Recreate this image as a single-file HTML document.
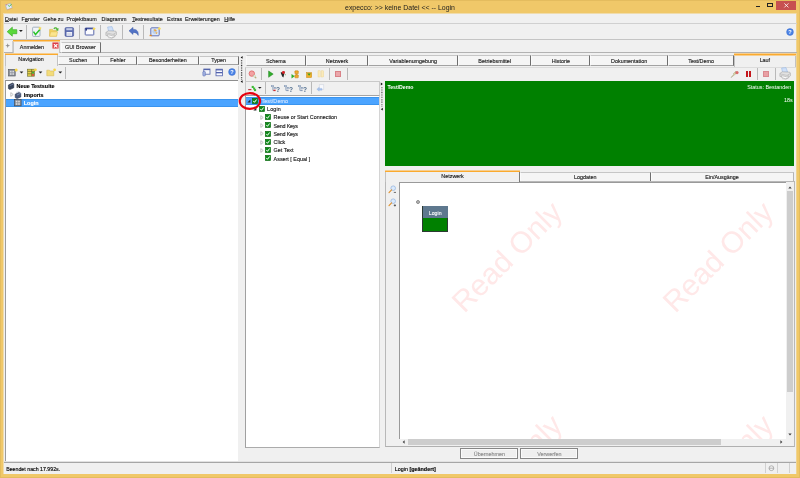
<!DOCTYPE html>
<html><head><meta charset="utf-8">
<style>
html,body{margin:0;padding:0;}
body{width:800px;height:478px;overflow:hidden;position:relative;background:#F0C869;font-family:"Liberation Sans",sans-serif;font-size:5.4px;color:#1a1a1a;-webkit-font-smoothing:antialiased;}
.a{position:absolute;}
.t{position:absolute;white-space:nowrap;line-height:8px;height:8px;-webkit-text-stroke:0.13px currentColor;}
.b{font-weight:bold;}
.wm{position:absolute;white-space:nowrap;font-size:29.9px;line-height:32px;height:32px;color:#ffe8e8;transform:translate(-50%,-50%) rotate(-45deg);}
u{text-decoration-thickness:0.45px;text-underline-offset:0.3px;text-decoration-color:#444;}
.c{text-align:center;}
.tab{position:absolute;box-sizing:border-box;border:1px solid;border-color:#c6c6c6 #6e6e6e #a2a2a2 #fbfbfb;background:#f5f5f5;text-align:center;white-space:nowrap;}
.tabA{position:absolute;box-sizing:border-box;border:1px solid #c2c2c2;border-bottom:none;border-top:none;background:#F0F0F0;text-align:center;white-space:nowrap;}
.or{position:absolute;height:3px;background:linear-gradient(to bottom,#F6CE90 0,#F6CE90 1px,#FBAA2E 1px,#FBAA2E 2px,#F6CE90 2px,#F6CE90 3px);}
.or2{position:absolute;height:2px;background:linear-gradient(to bottom,#F6CE90 0,#F6CE90 1px,#FBAA2E 1px,#FBAA2E 2px);}
.or3{position:absolute;height:2px;background:linear-gradient(to bottom,#FBAA2E 0,#FBAA2E 1px,#F6CE90 1px,#F6CE90 2px);}
.sep{position:absolute;width:1px;background:#b9b9b9;}
.hl{position:absolute;height:1px;background:#ababab;}
.cb{position:absolute;width:6px;height:6px;background:#0a8a14;box-sizing:border-box;border:0.5px solid #0a5a0e;}
.cb:after{content:"";position:absolute;left:1.7px;top:0.4px;width:1.6px;height:3.2px;border:solid #fff;border-width:0 1px 1px 0;transform:rotate(40deg);}
.ex{position:absolute;width:0;height:0;border-left:2.6px solid #a8a8a8;border-top:2px solid transparent;border-bottom:2px solid transparent;}
</style></head><body>
<!-- window chrome -->
<div id="root" style="position:absolute;left:0;top:0;width:800px;height:478px;will-change:transform;">
<div class="a" style="left:0;top:0;width:800px;height:478px;box-sizing:border-box;border:1px solid #E4BC5E;"></div>
<div class="a" id="win" style="left:4px;top:14px;width:792px;height:460px;background:#F0F0F0;"></div>
<div class="a" style="left:3px;top:13px;width:1px;height:461px;background:#F0DCAC;"></div>
<div class="a" style="left:796px;top:13px;width:1px;height:461px;background:#F0D491;"></div>
<div class="a" style="left:3px;top:13px;width:793px;height:1px;background:#F0DCAC;"></div>
<div class="t c" style="left:300px;width:200px;top:3.5px;font-size:6.95px;color:#1c1c1c;-webkit-text-stroke:0;">expecco: &gt;&gt; keine Datei &lt;&lt; -- Login</div>
<!-- SECTION:titlebtns -->
<svg class="a" style="left:4px;top:2px" width="10" height="10" viewBox="0 0 10 10"><path d="M1.4 2.8 L6.6 1.4 L8.2 5.8 L3 7.8 Z" fill="#e3ecf6" stroke="#9fb0c6" stroke-width="0.6"/><path d="M3 7.8 L8.2 5.8 L8.3 6.5 L3.2 8.5 Z" fill="#e0b070"/><path d="M1.4 2.8 L3.6 2.2 L2.6 3.6 Z" fill="#d86a64"/><path d="M4.2 3.3 L5.3 4.5 L7.6 2.1" fill="none" stroke="#55b84c" stroke-width="1"/></svg>
<div class="a" style="left:776.3px;top:0.5px;width:20.2px;height:9px;background:#C75050;"></div>
<svg class="a" style="left:783px;top:2px" width="7" height="7" viewBox="0 0 7 7"><path d="M1.4 1.4 L5.4 5.4 M5.4 1.4 L1.4 5.4" stroke="#fff" stroke-width="0.8" fill="none"/></svg>
<div class="a" style="left:755.8px;top:5.6px;width:3.8px;height:1.1px;background:#222;"></div>
<div class="a" style="left:767.2px;top:3.1px;width:5.6px;height:4px;box-sizing:border-box;border:0.5px solid #222;border-top-width:1.2px;"></div>
<!-- SECTION:menu -->
<div class="hl" style="left:3.5px;top:23px;width:793px;background:#d0d0d0;"></div>
<div class="t" style="left:5px;top:15.3px;"><u>D</u>atei</div>
<div class="t" style="left:21.6px;top:15.3px;">F<u>e</u>nster</div>
<div class="t" style="left:43.2px;top:15.3px;">Gehe zu</div>
<div class="t" style="left:66.5px;top:15.3px;">Projektbaum</div>
<div class="t" style="left:101.6px;top:15.3px;">Diagramm</div>
<div class="t" style="left:132.2px;top:15.3px;"><u>T</u>estresultate</div>
<div class="t" style="left:166.9px;top:15.3px;">Extras</div>
<div class="t" style="left:185px;top:15.3px;">Erweiterungen</div>
<div class="t" style="left:224.3px;top:15.3px;"><u>H</u>ilfe</div>
<!-- SECTION:toolbar -->
<div class="hl" style="left:3.5px;top:39px;width:793px;background:#c4c4c4;"></div>
<div class="sep" style="left:26px;top:24.5px;height:14px;"></div>
<div class="sep" style="left:78.5px;top:24.5px;height:14px;"></div>
<div class="sep" style="left:100.3px;top:24.5px;height:14px;"></div>
<div class="sep" style="left:122.3px;top:24.5px;height:14px;"></div>
<div class="sep" style="left:143px;top:24.5px;height:14px;"></div>
<!-- back arrow -->
<svg class="a" style="left:6px;top:26px" width="18" height="12" viewBox="0 0 18 12"><path d="M1.2 5.7 L6.3 1.2 L6.3 3.7 L10.8 3.7 L10.8 7.7 L6.3 7.7 L6.3 10.2 Z" fill="#5ad83a" stroke="#3bb026" stroke-width="0.7" stroke-linejoin="round"/><path d="M13 4 L16.8 4 L14.9 6 Z" fill="#222"/></svg>
<!-- check doc -->
<svg class="a" style="left:31px;top:26px" width="12" height="12" viewBox="0 0 12 12"><rect x="1.6" y="1.2" width="7.4" height="9.2" rx="0.9" fill="#f1f5f9" stroke="#93a3b4" stroke-width="0.8"/><path d="M2.5 5.6 L4.5 8.6 L8.9 3.6" fill="none" stroke="#27c427" stroke-width="1.5"/><path d="M8.9 0.5 L9.5 1.6 L10.7 1.8 L9.8 2.7 L10 3.9 L8.9 3.3 L7.8 3.9 L8 2.7 L7.1 1.8 L8.3 1.6 Z" fill="#f7da58"/></svg>
<!-- open folder -->
<svg class="a" style="left:47.5px;top:26px" width="12" height="12" viewBox="0 0 12 12"><path d="M1.6 3.4 L4.6 3.4 L5.4 4.4 L8.6 4.4 L8.6 10.2 L1.6 10.2 Z" fill="#f3d25e" stroke="#d4ae3c" stroke-width="0.5"/><path d="M1.6 10.2 L2.8 5.8 L9.6 5.8 L8.6 10.2 Z" fill="#fbe58e" stroke="#d8b444" stroke-width="0.4"/><path d="M5.4 2.6 C6.4 0.8 8.6 0.8 9.6 2.6 L10.6 2 L10.2 5 L7.6 3.9 L8.6 3.3 C8 2.3 7 2.3 6.3 3.2 Z" fill="#4db534"/></svg>
<!-- save -->
<svg class="a" style="left:63.5px;top:26px" width="11" height="12" viewBox="0 0 11 12"><rect x="1" y="1.6" width="8.6" height="8.8" rx="1.2" fill="#5e6eb0" stroke="#46559a" stroke-width="0.6"/><rect x="2.3" y="2.2" width="6" height="2" fill="#c3cce8"/><rect x="2.5" y="6" width="5.6" height="3.8" fill="#f1f3fa"/><path d="M3.2 7.4 H7.4 M3.2 8.6 H7.4" stroke="#b8bfd6" stroke-width="0.5"/></svg>
<!-- new doc -->
<svg class="a" style="left:83.5px;top:26px" width="12" height="12" viewBox="0 0 12 12"><rect x="1.2" y="2" width="8.6" height="7" rx="0.6" fill="#fbfbff" stroke="#4656a0" stroke-width="0.9"/><rect x="1.2" y="2" width="8.6" height="1.3" fill="#4656a0"/><rect x="1.4" y="2.2" width="1.6" height="2.4" fill="#2f3c80"/><path d="M10.1 0.9 L10.7 2 L11.9 2.2 L11 3.1 L11.2 4.3 L10.1 3.7 L9 4.3 L9.2 3.1 L8.3 2.2 L9.5 2 Z" fill="#f7da58"/></svg>
<!-- printer -->
<svg class="a" style="left:104.5px;top:25.5px" width="13" height="13" viewBox="0 0 13 13"><path d="M2.6 1 L7 0.6 L8.6 5 L3.6 5.6 Z" fill="#cfe0f8" stroke="#8fb0e0" stroke-width="0.5"/><path d="M0.9 6.4 L3.4 4.8 L10.8 5.2 L11.4 6.4 L11.4 8.8 L8 11.2 L0.9 9.4 Z" fill="#e2e2e2" stroke="#9a9a9a" stroke-width="0.5"/><path d="M0.9 6.8 L8 8.4 L11.4 6.4" fill="none" stroke="#a8a8a8" stroke-width="0.5"/><path d="M2.4 8.6 L7.6 9.8 L9.4 8.6 L9 11 L6.4 11.8 L2.8 10.6 Z" fill="#fafafa" stroke="#8c8c8c" stroke-width="0.4"/><path d="M3 11.6 L7 12.4 L10.4 10.4" fill="none" stroke="#bdbdbd" stroke-width="0.6"/></svg>
<!-- undo -->
<svg class="a" style="left:127.5px;top:26px" width="12" height="12" viewBox="0 0 12 12"><path d="M1 4.8 L5 1.4 L5 3.4 C8.6 3.2 10.6 5 10.2 9.4 C9.2 7.2 7.8 6.4 5 6.4 L5 8.4 Z" fill="#5273c6" stroke="#3d5aa6" stroke-width="0.5" stroke-linejoin="round"/></svg>
<!-- misc -->
<svg class="a" style="left:148.5px;top:26px" width="13" height="12" viewBox="0 0 13 12"><rect x="1.8" y="1.8" width="8.4" height="8" rx="0.9" fill="#dbe7f8" stroke="#5868b2" stroke-width="0.9"/><circle cx="5.6" cy="5.6" r="2.3" fill="#bcd2f0"/><path d="M4.6 3.6 A2.3 2.3 0 0 1 7.8 5 L5.8 5.4 Z" fill="#f0a63a"/><path d="M6.6 6.2 L8.6 6.6 A2.3 2.3 0 0 1 7 8 Z" fill="#f0a63a"/><path d="M10.3 0.7 L10.9 1.8 L12.1 2 L11.2 2.9 L11.4 4.1 L10.3 3.5 L9.2 4.1 L9.4 2.9 L8.5 2 L9.7 1.8 Z" fill="#f7da58"/><rect x="0.6" y="8.8" width="2.2" height="1.4" fill="#e08a2a"/></svg>
<!-- help -->
<svg class="a" style="left:785.7px;top:27.6px" width="8" height="8" viewBox="0 0 8 8"><circle cx="4" cy="4" r="3.4" fill="#4a83e6" stroke="#3a6ccc" stroke-width="0.5"/><text x="4" y="6.1" font-size="5.6" font-weight="bold" text-anchor="middle" fill="#fff" font-family="Liberation Sans">?</text></svg>
<!-- SECTION:tabs1 -->
<div class="hl" style="left:3.5px;top:52.3px;width:793px;background:#b2b2b2;"></div>
<div class="a" style="left:4px;top:41px;width:9px;height:11.4px;background:#f3f3f3;box-sizing:border-box;border-right:1px solid #d0d0d0;"></div>
<svg class="a" style="left:5.4px;top:42.6px" width="5.4" height="5.4" viewBox="0 0 5.4 5.4"><path d="M2.7 0.3 L3.3 2.1 L5.1 2.7 L3.3 3.3 L2.7 5.1 L2.1 3.3 L0.3 2.7 L2.1 2.1 Z" fill="#8e8e8e"/></svg>
<div class="tabA" style="left:13.2px;top:40px;width:47.3px;height:13px;border-color:#c6c6c6;"></div><div class="or3" style="left:13.2px;top:40px;width:47.3px;"></div>
<div class="t" style="left:19.8px;top:42.6px;">Anmelden</div>
<div class="a" style="left:52.4px;top:42.4px;width:6.4px;height:6.4px;background:#dc4046;border-radius:1.2px;box-sizing:border-box;border:0.6px solid #e88a8c;"></div>
<svg class="a" style="left:52px;top:42px" width="8" height="8" viewBox="0 0 8 8"><path d="M2.3 2.5 L5 5.2 M5 2.5 L2.3 5.2" stroke="#fff" stroke-width="1.15" fill="none" stroke-linecap="round"/></svg>
<div class="tab" style="left:60.5px;top:41.5px;width:40px;height:11px;"></div>
<div class="t" style="left:65px;top:42.6px;">GUI Browser</div>
<!-- SECTION:left -->
<!-- sub tabs -->
<div class="tabA" style="left:4.6px;top:53px;width:53px;height:12.8px;"></div><div class="or2" style="left:4.6px;top:53px;width:53px;"></div>
<div class="t c" style="left:4.6px;width:53px;top:55.2px;">Navigation</div>
<div class="tab" style="left:57.8px;top:55.5px;width:40.8px;height:9px;"></div>
<div class="t c" style="left:57.8px;width:40.8px;top:56px;">Suchen</div>
<div class="tab" style="left:98.6px;top:55.5px;width:38.4px;height:9px;"></div>
<div class="t c" style="left:98.6px;width:38.4px;top:56px;">Fehler</div>
<div class="tab" style="left:137px;top:55.5px;width:61.6px;height:9px;"></div>
<div class="t c" style="left:137px;width:61.6px;top:56px;">Besonderheiten</div>
<div class="tab" style="left:198.6px;top:55.5px;width:40px;height:9px;"></div>
<div class="t c" style="left:198.6px;width:40px;top:56px;">Typen</div>
<!-- left toolbar -->
<div class="a" style="left:4.6px;top:65.6px;width:234px;height:13.6px;box-sizing:border-box;border-right:1px solid #c6c6c6;border-left:1px solid #d4d4d4;"></div>
<div class="sep" style="left:65px;top:66.5px;height:12px;"></div>
<svg class="a" style="left:7.5px;top:68px" width="16" height="9" viewBox="0 0 16 9"><rect x="0.6" y="1.4" width="6.6" height="6.6" fill="#8d929a" stroke="#4c5058" stroke-width="0.6"/><rect x="2" y="2.8" width="1.6" height="1.6" fill="#d8dade"/><rect x="4.4" y="2.8" width="1.6" height="1.6" fill="#d8dade"/><rect x="2" y="5.2" width="1.6" height="1.6" fill="#d8dade"/><rect x="4.4" y="5.2" width="1.6" height="1.6" fill="#d8dade"/><circle cx="8.2" cy="2" r="1.5" fill="#f7d648"/><path d="M11.6 3.6 L15.4 3.6 L13.5 5.6 Z" fill="#222"/></svg>
<svg class="a" style="left:27px;top:68px" width="16" height="9" viewBox="0 0 16 9"><rect x="0.6" y="1.2" width="6.8" height="7" fill="#e6d24a" stroke="#6b6a2a" stroke-width="0.6"/><path d="M0.6 3.4 H7.4 M0.6 5.8 H7.4 M4.6 1.2 V8.2" stroke="#55551f" stroke-width="0.6"/><rect x="5" y="3.8" width="2" height="1.6" fill="#3fae3a"/><rect x="5" y="6.2" width="2" height="1.6" fill="#d9443a"/><circle cx="8.4" cy="1.8" r="1.4" fill="#f7d648"/><path d="M11.6 3.6 L15.4 3.6 L13.5 5.6 Z" fill="#222"/></svg>
<svg class="a" style="left:46px;top:68px" width="17" height="9" viewBox="0 0 17 9"><path d="M0.8 2.2 L3.4 2.2 L4.2 3 L7.8 3 L7.8 7.8 L0.8 7.8 Z" fill="#f3dc7a" stroke="#d2b24a" stroke-width="0.5"/><circle cx="8.6" cy="1.8" r="1.4" fill="#f7d648"/><path d="M12.4 3.6 L16.2 3.6 L14.3 5.6 Z" fill="#222"/></svg>
<!-- right icons in left toolbar -->
<svg class="a" style="left:202px;top:68px" width="9" height="9" viewBox="0 0 9 9"><rect x="1.8" y="1" width="6.2" height="5.2" fill="#f6f7fc" stroke="#5464aa" stroke-width="0.8"/><rect x="1.8" y="1" width="6.2" height="1.1" fill="#5464aa"/><rect x="0.8" y="3.4" width="2.6" height="4.6" rx="0.8" fill="#9fb0e0" stroke="#5a6ab2" stroke-width="0.5"/></svg>
<svg class="a" style="left:214.8px;top:68px" width="9" height="9" viewBox="0 0 9 9"><rect x="1" y="1.2" width="6.4" height="6.6" fill="#fafbff" stroke="#5262ac" stroke-width="0.8"/><rect x="1" y="1.2" width="6.4" height="1.2" fill="#5262ac"/><rect x="1" y="4" width="6.4" height="1.3" fill="#5262ac"/></svg>
<svg class="a" style="left:228px;top:68.4px" width="8" height="8" viewBox="0 0 8 8"><circle cx="4" cy="4" r="3.4" fill="#4a83e6" stroke="#3a6ccc" stroke-width="0.5"/><text x="4" y="6.1" font-size="5.6" font-weight="bold" text-anchor="middle" fill="#fff" font-family="Liberation Sans">?</text></svg>
<!-- left tree -->
<div class="a" style="left:4.6px;top:79.6px;width:233.6px;height:381px;background:#fff;box-sizing:border-box;border:1px solid #9c9c9c;border-top-color:#8e8e8e;border-right:none;border-bottom:none;"></div>
<div class="a" style="left:5.6px;top:98.6px;width:232.4px;height:8.6px;background:#4ba4ff;box-sizing:border-box;border-top:1px solid #3a94ee;border-bottom:1px solid #3a94ee;"></div>
<svg class="a" style="left:6.6px;top:81.5px" width="8" height="8" viewBox="0 0 8 8"><path d="M1.4 3 L5.4 1 L6.8 1.8 L6.8 5.8 L2.8 7.6 L1.4 6.6 Z" fill="#39465e" stroke="#1c2436" stroke-width="0.5"/><path d="M2.8 3.6 L6.8 1.8" stroke="#8ea0c4" stroke-width="0.6"/></svg>
<div class="t b" style="left:16.5px;top:82px;color:#000;">Neue Testsuite</div>
<svg class="a" style="left:10px;top:92.1px" width="4" height="5" viewBox="0 0 4 5"><path d="M0.8 0.6 L3.2 2.5 L0.8 4.4 Z" fill="#fff" stroke="#a0a0a0" stroke-width="0.6"/></svg>
<svg class="a" style="left:13.6px;top:90.6px" width="8" height="8" viewBox="0 0 8 8"><path d="M1.2 3.2 L4.8 1.4 L6.8 2.2 L6.8 6 L3 7.6 L1.2 6.6 Z" fill="#4a5a7c" stroke="#232c44" stroke-width="0.5"/><path d="M3 4 L6.8 2.2 M2.4 1.8 L3.2 0.6 M4.6 1.2 L5 0.2" stroke="#9fb0d4" stroke-width="0.6"/></svg>
<div class="t b" style="left:23.8px;top:90.6px;color:#000;">Imports</div>
<svg class="a" style="left:14.2px;top:99.2px" width="8" height="7.4" viewBox="0 0 8 7.4"><rect x="0.5" y="0.5" width="6.6" height="6.4" fill="#8a8e96" stroke="#3d4048" stroke-width="0.6"/><rect x="1.8" y="1.8" width="1.6" height="1.6" fill="#d9dbe0"/><rect x="4.2" y="1.8" width="1.6" height="1.6" fill="#d9dbe0"/><rect x="1.8" y="4.2" width="1.6" height="1.6" fill="#d9dbe0"/><rect x="4.2" y="4.2" width="1.6" height="1.6" fill="#d9dbe0"/></svg>
<div class="t b" style="left:23.8px;top:98.9px;color:#fff;">Login</div>
<!-- splitter -->
<svg class="a" style="left:239px;top:55px" width="6" height="30" viewBox="0 0 6 30"><path d="M1.6 2.4 L3.6 1 L3.6 3.8 Z M1.6 26.6 L3.6 25.2 L3.6 28 Z" fill="#111"/><path d="M2.6 5 V24.6" stroke="#333" stroke-width="1.3" stroke-dasharray="0.8 0.9"/></svg>
<!-- SECTION:right -->
<!-- right tabs -->
<div class="tab" style="left:246.2px;top:55px;width:59.4px;height:11.4px;"></div>
<div class="t c" style="left:246.2px;width:59.4px;top:56.7px;">Schema</div>
<div class="tab" style="left:305.6px;top:55px;width:62.8px;height:11.4px;"></div>
<div class="t c" style="left:305.6px;width:62.8px;top:56.7px;">Netzwerk</div>
<div class="tab" style="left:368.4px;top:55px;width:89.6px;height:11.4px;"></div>
<div class="t c" style="left:368.4px;width:89.6px;top:56.7px;">Variablenumgebung</div>
<div class="tab" style="left:458px;top:55px;width:73.4px;height:11.4px;"></div>
<div class="t c" style="left:458px;width:73.4px;top:56.7px;">Betriebsmittel</div>
<div class="tab" style="left:531.4px;top:55px;width:58.8px;height:11.4px;"></div>
<div class="t c" style="left:531.4px;width:58.8px;top:56.7px;">Historie</div>
<div class="tab" style="left:590.2px;top:55px;width:78px;height:11.4px;"></div>
<div class="t c" style="left:590.2px;width:78px;top:56.7px;">Dokumentation</div>
<div class="tab" style="left:668.2px;top:55px;width:65.8px;height:11.4px;"></div>
<div class="t c" style="left:668.2px;width:65.8px;top:56.7px;">Test/Demo</div>
<div class="tabA" style="left:734.2px;top:53px;width:61.4px;height:14px;"></div><div class="or" style="left:734.2px;top:53px;width:61.4px;"></div>
<div class="t c" style="left:734.2px;width:61.4px;top:56.3px;">Lauf</div>
<!-- right toolbar -->
<div class="a" style="left:245.4px;top:66.8px;width:550.4px;height:14px;box-sizing:border-box;border-left:1px solid #c4c4c4;border-top:1px solid #dcdcdc;"></div>
<div class="sep" style="left:260.8px;top:67.6px;height:12.6px;"></div>
<div class="sep" style="left:329.2px;top:67.6px;height:12.6px;"></div>
<div class="sep" style="left:347.4px;top:67.6px;height:12.6px;"></div>
<div class="sep" style="left:757.2px;top:67.6px;height:12.6px;"></div>
<div class="sep" style="left:774.6px;top:67.6px;height:12.6px;"></div>
<!-- magnifier red -->
<svg class="a" style="left:248.2px;top:70px" width="9" height="9" viewBox="0 0 9 9"><circle cx="3.8" cy="3.6" r="2.7" fill="#f2a3a3" stroke="#e06a6a" stroke-width="0.9"/><path d="M5.8 5.6 L7.8 7.8" stroke="#b9b07a" stroke-width="1.3" stroke-linecap="round"/><circle cx="6.6" cy="6" r="1.1" fill="#e7efdf" stroke="#b5c6a6" stroke-width="0.3"/></svg>
<!-- play -->
<svg class="a" style="left:266.8px;top:70.4px" width="8" height="8.4" viewBox="0 0 8 8.4"><path d="M1.6 1 L6.2 4.1 L1.6 7.3 Z" fill="#2fae2a" stroke="#1d7f1a" stroke-width="0.5" stroke-linejoin="round"/></svg>
<!-- bug / traffic -->
<svg class="a" style="left:279.4px;top:70.2px" width="8" height="8.4" viewBox="0 0 8 8.4"><path d="M1.6 2.6 L5.8 1.6 L4.4 7.6 L3.2 6.4 Z" fill="#262626"/><circle cx="4.4" cy="2.5" r="1.45" fill="#dc2226"/><path d="M5.8 4.2 L6.7 4.9" stroke="#2d8a2a" stroke-width="0.8"/></svg>
<!-- play + orange blocks -->
<svg class="a" style="left:291.4px;top:69.8px" width="9" height="9" viewBox="0 0 9 9"><rect x="3.9" y="0.8" width="3.4" height="3" rx="0.5" fill="#f2a92c" stroke="#b87a10" stroke-width="0.5"/><rect x="3.9" y="4.8" width="3.4" height="3" rx="0.5" fill="#f2a92c" stroke="#b87a10" stroke-width="0.5"/><path d="M5.6 3.8 V4.8" stroke="#b87a10" stroke-width="0.7"/><path d="M0.5 4 L3.7 6.2 L0.5 8.4 Z" fill="#2fae2a"/></svg>
<!-- envelope -->
<svg class="a" style="left:305.6px;top:71.6px" width="6.4" height="6.4" viewBox="0 0 6.4 6.4"><rect x="0.5" y="0.6" width="5.2" height="5" fill="#f0b02a" stroke="#c98a14" stroke-width="0.5"/><path d="M1.3 1.4 L4.9 1.4 L3.1 3.7 Z" fill="#2f9e2a"/></svg>
<!-- pause light -->
<svg class="a" style="left:316.8px;top:70.4px" width="8" height="8" viewBox="0 0 8 8"><rect x="1" y="0.8" width="2.2" height="6.2" fill="#fbeab8" stroke="#ecd28c" stroke-width="0.4"/><rect x="4.4" y="0.8" width="2.2" height="6.2" fill="#fbeab8" stroke="#ecd28c" stroke-width="0.4"/></svg>
<!-- stop pink -->
<div class="a" style="left:335.4px;top:71.4px;width:6px;height:6px;box-sizing:border-box;background:#eba6aa;border:0.7px solid #d98288;"></div>
<!-- right side icons -->
<svg class="a" style="left:729.6px;top:70px" width="10" height="9" viewBox="0 0 10 9"><path d="M1 7.6 L4.2 3.8 L3.4 3.6 L6 1.2 L5 3.4 L6 3.6 Z" fill="#f3e7a8" stroke="#8c8a6a" stroke-width="0.4"/><circle cx="7" cy="2.6" r="1.6" fill="#d86a6a"/></svg>
<div class="a" style="left:746px;top:71.2px;width:1.8px;height:6px;background:#c4161c;"></div>
<div class="a" style="left:749.2px;top:71.2px;width:1.8px;height:6px;background:#c4161c;"></div>
<div class="a" style="left:763px;top:71.2px;width:5.8px;height:5.8px;box-sizing:border-box;background:#e9a0a4;border:0.7px solid #d98a90;"></div>
<svg class="a" style="left:778.8px;top:67.4px" width="13" height="13" viewBox="0 0 13 13"><path d="M2.6 1 L7 0.6 L8.6 5 L3.6 5.6 Z" fill="#cfe0f8" stroke="#8fb0e0" stroke-width="0.5"/><path d="M0.9 6.4 L3.4 4.8 L10.8 5.2 L11.4 6.4 L11.4 8.8 L8 11.2 L0.9 9.4 Z" fill="#e2e2e2" stroke="#9a9a9a" stroke-width="0.5"/><path d="M0.9 6.8 L8 8.4 L11.4 6.4" fill="none" stroke="#a8a8a8" stroke-width="0.5"/><path d="M2.4 8.6 L7.6 9.8 L9.4 8.6 L9 11 L6.4 11.8 L2.8 10.6 Z" fill="#fafafa" stroke="#8c8c8c" stroke-width="0.4"/><path d="M3 11.6 L7 12.4 L10.4 10.4" fill="none" stroke="#bdbdbd" stroke-width="0.6"/></svg>
<!-- second toolbar (tree) -->
<div class="a" style="left:245.4px;top:81.4px;width:134.6px;height:13.4px;box-sizing:border-box;border:1px solid #c9c9c9;border-bottom:none;"></div>
<div class="sep" style="left:265.4px;top:82.4px;height:11.6px;"></div>
<div class="sep" style="left:311.4px;top:82.4px;height:11.6px;"></div>
<svg class="a" style="left:248.2px;top:84px" width="14" height="9" viewBox="0 0 14 9"><rect x="0.2" y="5" width="3.2" height="1.2" fill="#b84048"/><rect x="3.7" y="1.9" width="2.1" height="2.1" fill="#3cba34"/><rect x="5.1" y="3.5" width="2.1" height="2.1" fill="#3cba34"/><rect x="6" y="5.1" width="2.1" height="2" fill="#3cba34"/><path d="M10 3 L13.6 3 L11.8 4.8 Z" fill="#222"/></svg>
<svg class="a" style="left:270.6px;top:84.6px" width="9" height="8" viewBox="0 0 9 8"><path d="M0.6 1.1 H3 M1.8 1.1 V5.4 M1.8 3 H4.4 M1.8 5.4 H3" stroke="#8196b2" stroke-width="0.7" fill="none"/><rect x="0.5" y="0.5" width="1.7" height="1.3" fill="#dfe7f2" stroke="#7088a8" stroke-width="0.4"/><rect x="3.2" y="2.3" width="1.7" height="1.3" fill="#dfe7f2" stroke="#7088a8" stroke-width="0.4"/><rect x="2.4" y="4.7" width="2.2" height="1.4" fill="#d02a2e"/><text x="7" y="6.6" font-size="6.6" font-weight="bold" text-anchor="middle" fill="#4f6c8c" font-family="Liberation Sans">?</text></svg>
<svg class="a" style="left:284.4px;top:84.6px" width="9" height="8" viewBox="0 0 9 8"><path d="M0.6 1.1 H3 M1.8 1.1 V5.4 M1.8 3 H4.4 M1.8 5.4 H3" stroke="#8196b2" stroke-width="0.7" fill="none"/><rect x="0.5" y="0.5" width="1.7" height="1.3" fill="#dfe7f2" stroke="#7088a8" stroke-width="0.4"/><rect x="3.2" y="2.3" width="1.7" height="1.3" fill="#dfe7f2" stroke="#7088a8" stroke-width="0.4"/><rect x="2.4" y="4.7" width="2.2" height="1.4" fill="#8a9cb8"/><text x="7" y="6.6" font-size="6.6" font-weight="bold" text-anchor="middle" fill="#4f6c8c" font-family="Liberation Sans">?</text></svg>
<svg class="a" style="left:298.2px;top:84.6px" width="9" height="8" viewBox="0 0 9 8"><path d="M0.6 1.1 H3 M1.8 1.1 V5.4 M1.8 3 H4.4 M1.8 5.4 H3" stroke="#8196b2" stroke-width="0.7" fill="none"/><rect x="0.5" y="0.5" width="1.7" height="1.3" fill="#dfe7f2" stroke="#7088a8" stroke-width="0.4"/><rect x="3.2" y="2.3" width="1.7" height="1.3" fill="#dfe7f2" stroke="#7088a8" stroke-width="0.4"/><rect x="2.4" y="4.7" width="2.2" height="1.4" fill="#8a9cb8"/><text x="7" y="6.6" font-size="6.6" font-weight="bold" text-anchor="middle" fill="#4f6c8c" font-family="Liberation Sans">?</text></svg>
<svg class="a" style="left:316px;top:84.2px" width="9" height="8" viewBox="0 0 9 8"><rect x="3.2" y="0.8" width="4.6" height="4.8" fill="#f8f9fc" stroke="#c9cfdc" stroke-width="0.5"/><path d="M0.8 5.2 L3.2 3.2 L3.2 4.4 L6 4.4 L6 6.2 L3.2 6.2 L3.2 7.2 Z" fill="#a6c2ec" stroke="#8eaee0" stroke-width="0.3"/></svg>
<!-- tree panel -->
<div class="a" style="left:245px;top:95.2px;width:135.2px;height:353px;background:#fff;box-sizing:border-box;border:1px solid #a0a0a0;border-top-color:#a4a4a4;border-right-color:#d4d4d4;border-bottom-color:#ababab;"></div>
<div class="a" style="left:246.4px;top:96.6px;width:132.8px;height:8.4px;background:#4ba4ff;box-sizing:border-box;border-top:1px solid #3a94ee;border-bottom:1px solid #3a94ee;"></div>
<svg class="a" style="left:247px;top:99px" width="4" height="4" viewBox="0 0 4 4"><path d="M3.4 0.4 L3.4 3.4 L0.4 3.4 Z" fill="#2a2a2a"/></svg>
<svg class="a" style="left:252px;top:97.7px" width="6" height="6" viewBox="0 0 6 6"><rect x="0.3" y="0.3" width="5.3" height="5.3" fill="#0c8c18" stroke="#0a6410" stroke-width="0.6"/><path d="M1.3 2.9 L2.5 4.3 L4.6 1.5" fill="none" stroke="#fff" stroke-width="1"/></svg>
<div class="t" style="left:261.4px;top:96.8px;color:#cfe3ff;letter-spacing:0.12px;">Test/Demo</div>
<svg class="a" style="left:253.4px;top:107.4px" width="4" height="4" viewBox="0 0 4 4"><path d="M3.4 0.4 L3.4 3.4 L0.4 3.4 Z" fill="#2a2a2a"/></svg>
<svg class="a" style="left:258.9px;top:105.9px" width="6" height="6" viewBox="0 0 6 6"><rect x="0.3" y="0.3" width="5.3" height="5.3" fill="#0c8c18" stroke="#0a6410" stroke-width="0.6"/><path d="M1.3 2.9 L2.5 4.3 L4.6 1.5" fill="none" stroke="#fff" stroke-width="1"/></svg>
<div class="t" style="left:267px;top:105.1px;letter-spacing:0.15px;">Login</div>
<svg class="a" style="left:260.4px;top:114.8px" width="4" height="5" viewBox="0 0 4 5"><path d="M0.8 0.6 L3.2 2.5 L0.8 4.4 Z" fill="#fff" stroke="#a0a0a0" stroke-width="0.6"/></svg>
<svg class="a" style="left:265.2px;top:114.2px" width="6" height="6" viewBox="0 0 6 6"><rect x="0.3" y="0.3" width="5.3" height="5.3" fill="#0c8c18" stroke="#0a6410" stroke-width="0.6"/><path d="M1.3 2.9 L2.5 4.3 L4.6 1.5" fill="none" stroke="#fff" stroke-width="1"/></svg>
<div class="t" style="left:273.6px;top:113.3px;">Reuse or Start Connection</div>
<svg class="a" style="left:260.4px;top:123px" width="4" height="5" viewBox="0 0 4 5"><path d="M0.8 0.6 L3.2 2.5 L0.8 4.4 Z" fill="#fff" stroke="#a0a0a0" stroke-width="0.6"/></svg>
<svg class="a" style="left:265.2px;top:122.4px" width="6" height="6" viewBox="0 0 6 6"><rect x="0.3" y="0.3" width="5.3" height="5.3" fill="#0c8c18" stroke="#0a6410" stroke-width="0.6"/><path d="M1.3 2.9 L2.5 4.3 L4.6 1.5" fill="none" stroke="#fff" stroke-width="1"/></svg>
<div class="t" style="left:273.6px;top:121.5px;letter-spacing:-0.2px;">Send Keys</div>
<svg class="a" style="left:260.4px;top:131.3px" width="4" height="5" viewBox="0 0 4 5"><path d="M0.8 0.6 L3.2 2.5 L0.8 4.4 Z" fill="#fff" stroke="#a0a0a0" stroke-width="0.6"/></svg>
<svg class="a" style="left:265.2px;top:130.7px" width="6" height="6" viewBox="0 0 6 6"><rect x="0.3" y="0.3" width="5.3" height="5.3" fill="#0c8c18" stroke="#0a6410" stroke-width="0.6"/><path d="M1.3 2.9 L2.5 4.3 L4.6 1.5" fill="none" stroke="#fff" stroke-width="1"/></svg>
<div class="t" style="left:273.6px;top:129.8px;letter-spacing:-0.2px;">Send Keys</div>
<svg class="a" style="left:260.4px;top:139.5px" width="4" height="5" viewBox="0 0 4 5"><path d="M0.8 0.6 L3.2 2.5 L0.8 4.4 Z" fill="#fff" stroke="#a0a0a0" stroke-width="0.6"/></svg>
<svg class="a" style="left:265.2px;top:138.9px" width="6" height="6" viewBox="0 0 6 6"><rect x="0.3" y="0.3" width="5.3" height="5.3" fill="#0c8c18" stroke="#0a6410" stroke-width="0.6"/><path d="M1.3 2.9 L2.5 4.3 L4.6 1.5" fill="none" stroke="#fff" stroke-width="1"/></svg>
<div class="t" style="left:273.6px;top:138px;">Click</div>
<svg class="a" style="left:260.4px;top:147.7px" width="4" height="5" viewBox="0 0 4 5"><path d="M0.8 0.6 L3.2 2.5 L0.8 4.4 Z" fill="#fff" stroke="#a0a0a0" stroke-width="0.6"/></svg>
<svg class="a" style="left:265.2px;top:147.1px" width="6" height="6" viewBox="0 0 6 6"><rect x="0.3" y="0.3" width="5.3" height="5.3" fill="#0c8c18" stroke="#0a6410" stroke-width="0.6"/><path d="M1.3 2.9 L2.5 4.3 L4.6 1.5" fill="none" stroke="#fff" stroke-width="1"/></svg>
<div class="t" style="left:273.6px;top:146.2px;">Get Text</div>
<svg class="a" style="left:265.2px;top:155.4px" width="6" height="6" viewBox="0 0 6 6"><rect x="0.3" y="0.3" width="5.3" height="5.3" fill="#0c8c18" stroke="#0a6410" stroke-width="0.6"/><path d="M1.3 2.9 L2.5 4.3 L4.6 1.5" fill="none" stroke="#fff" stroke-width="1"/></svg>
<div class="t" style="left:273.6px;top:154.5px;">Assert [ Equal ]</div>
<!-- red ellipse annotation -->
<svg class="a" style="left:236px;top:90px" width="28" height="22" viewBox="0 0 28 22"><ellipse cx="13.9" cy="11" rx="10.2" ry="7.9" fill="none" stroke="#e6000f" stroke-width="2.1"/></svg>
<!-- splitter 2 -->
<svg class="a" style="left:380.4px;top:81px" width="5" height="32" viewBox="0 0 5 32"><path d="M0.8 1.6 L2.8 3 L0.8 4.4 Z M2.8 26.8 L0.8 28.2 L2.8 29.6 Z" fill="#111"/><path d="M1.9 6 V26" stroke="#444" stroke-width="1.1" stroke-dasharray="0.8 0.9"/></svg>
<!-- green result panel -->
<div class="a" style="left:385.2px;top:80.8px;width:409px;height:85.2px;background:#008000;"></div>
<div class="t b" style="left:387.4px;top:82.8px;color:#fff;font-size:5.2px;-webkit-text-stroke:0;">Test/Demo</div>
<div class="t" style="right:8.8px;top:82.9px;color:#fff;-webkit-text-stroke:0;">Status: Bestanden</div>
<div class="t" style="right:7.4px;top:96.4px;color:#fff;-webkit-text-stroke:0;">18s</div>
<!-- SECTION:lower -->
<!-- lower tabs -->
<div class="tabA" style="left:385.4px;top:170px;width:134.4px;height:13px;border-right-color:#7a7a7a;"></div><div class="or2" style="left:385.4px;top:170px;width:134.4px;"></div>
<div class="t c" style="left:385.4px;width:134.4px;top:172.2px;">Netzwerk</div>
<div class="tab" style="left:519.6px;top:172px;width:131px;height:10px;"></div>
<div class="t c" style="left:520px;width:130.4px;top:172.7px;">Logdaten</div>
<div class="tab" style="left:650.6px;top:172px;width:143px;height:10px;border-right-color:#b4b4b4;"></div>
<div class="t c" style="left:651px;width:142px;top:172.7px;">Ein/Ausg&auml;nge</div>
<!-- pane frame -->
<div class="a" style="left:385.4px;top:181.6px;width:409.4px;height:265.4px;box-sizing:border-box;border-left:1px solid #b8b8b8;border-right:1px solid #b8b8b8;border-bottom:1px solid #b0b0b0;"></div>
<div class="hl" style="left:519.8px;top:181.4px;width:275px;background:#b8b8b8;"></div>
<!-- canvas -->
<div class="a" id="canvas" style="left:398.6px;top:182.2px;width:387.4px;height:256.6px;background:#fff;overflow:hidden;box-sizing:border-box;border-left:1px solid #9a9a9a;border-top:1px solid #9a9a9a;">
<div class="wm" style="left:107.2px;top:74.1px;">Read Only</div>
<div class="wm" style="left:318.8px;top:74.1px;">Read Only</div>
<div class="wm" style="left:107.2px;top:286.7px;">Read Only</div>
<div class="wm" style="left:318.8px;top:286.7px;">Read Only</div>
<div class="a" style="left:16.7px;top:16.5px;width:4px;height:4px;border-radius:50%;background:#b9b9b9;box-sizing:border-box;border:0.7px solid #8c8c8c;"></div>
<div class="a" style="left:22.5px;top:22.4px;width:26.2px;height:26px;background:#008000;box-sizing:border-box;border:0.6px solid #2c3a33;"></div>
<div class="a" style="left:23.1px;top:23px;width:25px;height:12px;background:#5E788E;"></div>
<div class="t c" style="left:22.5px;width:26.2px;top:25.4px;color:#fff;font-size:5.2px;-webkit-text-stroke:0.1px #fff;">Login</div>
</div>
<!-- zoom icons -->
<svg class="a" style="left:388.4px;top:185px" width="9" height="9" viewBox="0 0 9 9"><circle cx="5.2" cy="3.2" r="2.3" fill="#dbeafc" stroke="#8fb0dc" stroke-width="0.7"/><path d="M3.6 4.8 L1 7.6" stroke="#e0902a" stroke-width="1.1" stroke-linecap="round"/><path d="M5.8 7.4 H8" stroke="#333" stroke-width="0.7"/></svg>
<svg class="a" style="left:388.4px;top:197.6px" width="9" height="9" viewBox="0 0 9 9"><circle cx="5.2" cy="3.2" r="2.3" fill="#dbeafc" stroke="#8fb0dc" stroke-width="0.7"/><path d="M3.6 4.8 L1 7.6" stroke="#e0902a" stroke-width="1.1" stroke-linecap="round"/><path d="M5.8 7.4 H8 M6.9 6.3 V8.5" stroke="#333" stroke-width="0.7"/></svg>
<!-- v scrollbar -->
<div class="a" style="left:786px;top:182.6px;width:7.6px;height:256px;background:#f0f0f0;"></div>
<div class="a" style="left:786.6px;top:191.4px;width:6.2px;height:200.8px;background:#cdcdcd;"></div>
<svg class="a" style="left:787.6px;top:185.6px" width="4" height="3" viewBox="0 0 4 3"><path d="M0.3 2.6 L2 0.6 L3.7 2.6 Z" fill="#404040"/></svg>
<svg class="a" style="left:787.6px;top:432.6px" width="4" height="3" viewBox="0 0 4 3"><path d="M0.3 0.4 L2 2.4 L3.7 0.4 Z" fill="#404040"/></svg>
<!-- h scrollbar -->
<div class="a" style="left:399.4px;top:438.8px;width:394.2px;height:7.2px;background:#f0f0f0;"></div>
<div class="a" style="left:407.6px;top:439.4px;width:313px;height:6px;background:#cdcdcd;"></div>
<svg class="a" style="left:401.6px;top:440.4px" width="3" height="4" viewBox="0 0 3 4"><path d="M2.6 0.3 L0.6 2 L2.6 3.7 Z" fill="#404040"/></svg>
<svg class="a" style="left:779.6px;top:440.4px" width="3" height="4" viewBox="0 0 3 4"><path d="M0.4 0.3 L2.4 2 L0.4 3.7 Z" fill="#404040"/></svg>
<!-- buttons -->
<div class="a" style="left:460.4px;top:448px;width:58px;height:11px;box-sizing:border-box;border:1px solid #868686;background:#efefef;box-shadow:inset 0 0 0 1px #fafafa;"></div>
<div class="t c" style="left:460.4px;width:58px;top:449.6px;color:#8c8c8c;">&Uuml;bernehmen</div>
<div class="a" style="left:520.4px;top:448px;width:58px;height:11px;box-sizing:border-box;border:1px solid #868686;background:#efefef;box-shadow:inset 0 0 0 1px #fafafa;"></div>
<div class="t c" style="left:520.4px;width:58px;top:449.6px;color:#8c8c8c;">Verwerfen</div>
<!-- SECTION:status -->
<div class="hl" style="left:4px;top:462px;width:792px;background:#a6a6a6;"></div><div class="hl" style="left:4px;top:461px;width:792px;background:#e2e2e2;"></div>
<div class="t" style="left:6.2px;top:465.2px;color:#000;font-size:5.25px;">Beendet nach 17.992s.</div>
<div class="sep" style="left:391px;top:463.4px;height:10px;background:#d0d0d0;"></div>
<div class="t" style="left:394.8px;top:464.6px;color:#000;">Login <b>[ge&auml;ndert]</b></div>
<div class="sep" style="left:765px;top:463.4px;height:10px;background:#d0d0d0;"></div>
<div class="sep" style="left:777.4px;top:463.4px;height:10px;background:#d0d0d0;"></div>
<div class="sep" style="left:789px;top:463.4px;height:10px;background:#d0d0d0;"></div>
<svg class="a" style="left:767.6px;top:465px" width="7" height="7" viewBox="0 0 7 7"><circle cx="3.4" cy="3.2" r="2.4" fill="#f4f4f4" stroke="#8a8a8a" stroke-width="0.6"/><path d="M1 3.2 H5.8" stroke="#8a8a8a" stroke-width="0.6"/></svg>
</div>
</body></html>
